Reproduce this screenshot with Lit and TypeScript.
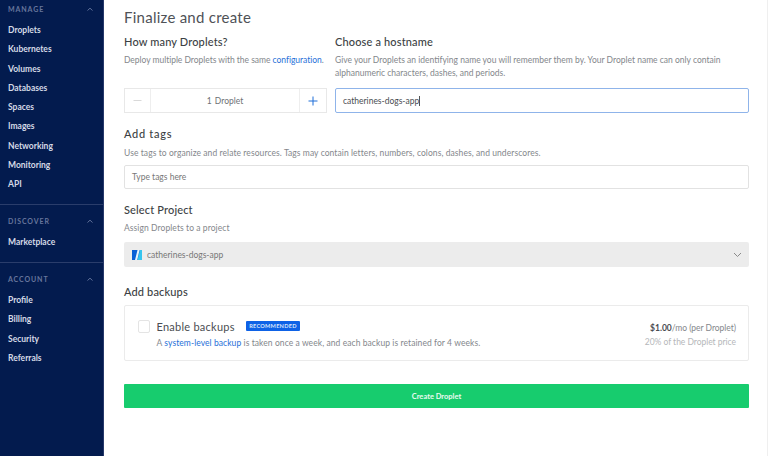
import { LitElement, html, css } from "lit";
import { customElement } from "lit/decorators.js";

const chevUp = html`<svg class="chev" width="8" height="5" viewBox="0 0 8 5"><path d="M1.5 3.5 L4 1.2 L6.5 3.5" fill="none" stroke="#5f7099" stroke-width="1"/></svg>`;

@customElement("app-root")
export class AppRoot extends LitElement {
  static styles = css`
    :host { display: flex; width: 770px; height: 456px; overflow: hidden; background: #fff; font-family: "Lato", "Liberation Sans", sans-serif; color: #444; }
    .side { width: 104px; flex: none; height: 456px; background: #031b4e; box-sizing: border-box; border-right: 1px solid #27396a; }
    .sec { display: flex; flex-direction: column; padding: 0 8px; }
    .sec + .sec { border-top: 1px solid #2a3d6b; }
    .sec.s1 { height: 204px; }
    .sec.s2 { height: 58px; box-sizing: border-box; }
    .head { display: flex; justify-content: space-between; align-items: center; height: 10px; font-size: 7px; font-weight: 700; letter-spacing: 0.9px; color: #67769c; padding-right: 1px; margin: 4px 0 7px; }
    .sec.s2 .head, .sec.s3 .head { margin: 11px 0 7px; }
    .item { height: 19.3px; line-height: 19.3px; font-size: 8.5px; font-weight: 700; color: #d5dae6; }
    .main { width: 625px; flex: none; margin-left: 20px; display: flex; flex-direction: column; }
    h1 { margin: 8px 0 0; height: 18px; line-height: 18px; font-size: 15px; font-weight: 400; color: #4f5257; letter-spacing: 0.25px; }
    h2 { margin: 0; height: 16px; line-height: 16px; font-size: 11px; font-weight: 500; color: #3c3f44; letter-spacing: 0.15px; }
    h2.wide { letter-spacing: 0.7px; }
    .top { display: grid; grid-template-columns: 203px 414px; column-gap: 8px; margin-top: 8px; }
    p { margin: 0; font-size: 8.5px; line-height: 14px; color: #84878c; letter-spacing: 0.08px; white-space: nowrap; }
    a { color: #1f6fd8; }
    .col { display: flex; flex-direction: column; }
    .col p { margin-top: 4px; height: 34px; line-height: 12.5px; letter-spacing: 0; }
    .col p.dep { letter-spacing: -0.03px; }
    .stepper { display: grid; grid-template-columns: 25px 1fr 26px; height: 25px; border: 1px solid #e8e8e8; box-sizing: border-box; }
    .stepper div { display: flex; align-items: center; justify-content: center; font-size: 8.5px; color: #6e7176; }
    .stepper .mid { border-left: 1px solid #eee; border-right: 1px solid #eee; word-spacing: 1px; }
    .host { height: 25px; box-sizing: border-box; border: 1px solid #8fb4ea; border-radius: 2px; padding: 0 7px; display: flex; align-items: center; font-size: 8.5px; color: #4a4d52; }
    .caret { width: 1px; height: 10px; background: #555; }
    .b-tags { margin-top: 13px; }
    .b-tags p { margin-top: 4px; }
    .tags { display: flex; align-items: center; height: 24px; box-sizing: border-box; border: 1px solid #e2e2e2; border-radius: 2px; padding: 0 7px; font-size: 8.5px; color: #777; margin-top: 5px; }
    .b-proj { margin-top: 13px; }
    .b-proj p { margin-top: 3px; }
    .select { display: flex; align-items: center; height: 25px; box-sizing: border-box; background: #ececec; border-radius: 2px; padding: 0 7px 0 8px; font-size: 8.5px; color: #777; margin-top: 7px; }
    .select span { margin-left: 5px; flex: 1; }
    .b-back { margin-top: 17px; }
    .card { display: flex; justify-content: space-between; height: 56px; box-sizing: border-box; border: 1px solid #ebebeb; border-radius: 2px; margin-top: 5px; padding: 0 12px 0 13px; }
    .chk { width: 12px; height: 13px; box-sizing: border-box; border: 1px solid #e4e4e4; border-radius: 2px; margin-top: 14px; flex: none; }
    .left { display: flex; gap: 6.5px; }
    .ttl { display: flex; align-items: center; gap: 11px; height: 14px; margin-top: 13px; font-size: 11px; color: #4a4d52; letter-spacing: 0.25px; }
    .badge { background: #0e62e6; color: #dbe7fb; font-size: 5.6px; font-weight: 700; height: 10px; line-height: 10px; padding: 0 3.5px; border-radius: 1px; letter-spacing: 0.25px; }
    .left p { margin-top: 2.5px; }
    .right { text-align: right; margin-top: 15px; font-size: 8.5px; line-height: 14px; color: #84878c; letter-spacing: -0.03px; }
    .right b { color: #4a4d52; font-weight: 700; }
    .right div + div { color: #b5b7ba; }
    .btn { margin-top: 23px; height: 24px; background: #17cc6e; border-radius: 1px; display: flex; align-items: center; justify-content: center; color: #e9fbf1; font-size: 7.5px; font-weight: 700; }
    .rule { width: 1px; height: 456px; background: #efefef; margin-left: 18px; flex: none; }
  `;

  render() {
    const manage = ["Droplets", "Kubernetes", "Volumes", "Databases", "Spaces", "Images", "Networking", "Monitoring", "API"];
    const account = ["Profile", "Billing", "Security", "Referrals"];
    return html`
      <nav class="side">
        <div class="sec s1"><div class="head">MANAGE ${chevUp}</div>${manage.map((m) => html`<div class="item">${m}</div>`)}</div>
        <div class="sec s2"><div class="head">DISCOVER ${chevUp}</div><div class="item">Marketplace</div></div>
        <div class="sec s3"><div class="head">ACCOUNT ${chevUp}</div>${account.map((m) => html`<div class="item">${m}</div>`)}</div>
      </nav>
      <main class="main">
        <h1>Finalize and create</h1>
        <div class="top">
          <div class="col">
            <h2>How many Droplets?</h2>
            <p class="dep">Deploy multiple Droplets with the same <a>configuration</a>.</p>
            <div class="stepper">
              <div><svg width="9" height="9" viewBox="0 0 9 9"><path d="M0.5 4.5H8.5" stroke="#d9d9d9"/></svg></div>
              <div class="mid">1 Droplet</div>
              <div><svg width="10" height="10" viewBox="0 0 10 10"><path d="M0.5 5H9.5M5 0.5V9.5" stroke="#1f6fd8"/></svg></div>
            </div>
          </div>
          <div class="col">
            <h2>Choose a hostname</h2>
            <p>Give your Droplets an identifying name you will remember them by. Your Droplet name can only contain<br>alphanumeric characters, dashes, and periods.</p>
            <div class="host">catherines-dogs-app<i class="caret"></i></div>
          </div>
        </div>
        <div class="b-tags">
          <h2 class="wide">Add tags</h2>
          <p>Use tags to organize and relate resources. Tags may contain letters, numbers, colons, dashes, and underscores.</p>
          <div class="tags">Type tags here</div>
        </div>
        <div class="b-proj">
          <h2>Select Project</h2>
          <p>Assign Droplets to a project</p>
          <div class="select">
            <svg width="10" height="10" viewBox="0 0 10 10"><rect width="10" height="10" fill="#0a5fd6"/><path d="M5.5 10 L8 0 H10 V10Z" fill="#35c4ee"/><path d="M3 10 L5.5 0 H7.6 L5.2 10Z" fill="#e8f4fb"/></svg>
            <span>catherines-dogs-app</span>
            <svg width="9" height="6" viewBox="0 0 9 6"><path d="M1 1 L4.5 4.5 L8 1" fill="none" stroke="#8a8a8a"/></svg>
          </div>
        </div>
        <div class="b-back">
          <h2>Add backups</h2>
          <div class="card">
            <div class="left">
              <div class="chk"></div>
              <div>
                <div class="ttl">Enable backups <span class="badge">RECOMMENDED</span></div>
                <p>A <a>system-level backup</a> is taken once a week, and each backup is retained for 4 weeks.</p>
              </div>
            </div>
            <div class="right"><div><b>$1.00</b>/mo (per Droplet)</div><div>20% of the Droplet price</div></div>
          </div>
        </div>
        <div class="btn">Create Droplet</div>
      </main>
      <div class="rule"></div>
    `;
  }
}
